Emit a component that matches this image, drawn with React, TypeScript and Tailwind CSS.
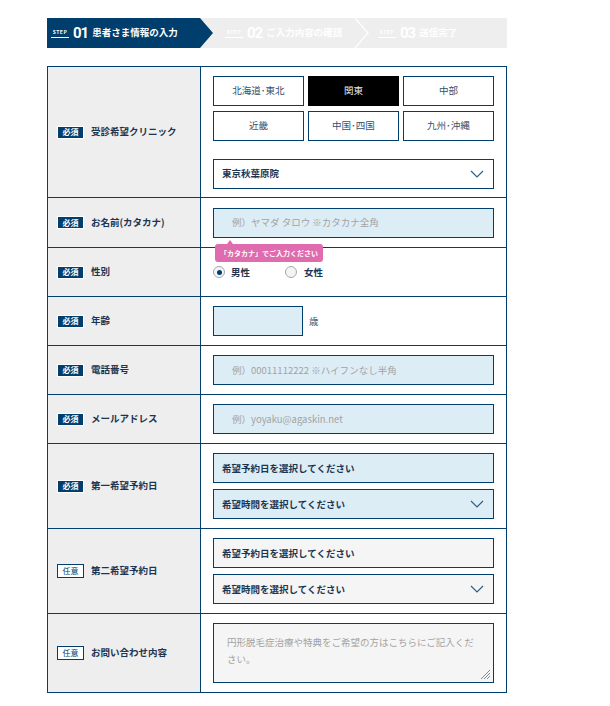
import React from 'react';

const Required = () => (
  <span className="inline-flex items-center justify-center w-[27px] h-[13px] bg-[#003e6d] border border-white text-white text-[8px] font-bold leading-none shrink-0">
    必須
  </span>
);

const Optional = () => (
  <span className="inline-flex items-center justify-center w-[27px] h-[14px] bg-white border border-[#003e6d] text-[#003e6d] text-[8px] leading-none shrink-0">
    任意
  </span>
);

const Chevron = () => (
  <svg width="14" height="8" viewBox="0 0 14 8" className="shrink-0">
    <polyline points="1,1 7,7 13,1" fill="none" stroke="#2f5f86" strokeWidth="1.2" />
  </svg>
);

const StepLabel = ({ num, text }: { num: string; text: string }) => (
  <div className="flex items-center text-white">
    <div className="flex flex-col items-center mr-[4px]">
      <span className="text-[5px] font-bold leading-none tracking-[0.5px]">STEP</span>
      <span className="block w-[18px] h-px mt-[3px] bg-white" />
    </div>
    <span className="text-[15px] font-bold leading-none font-['Roboto',sans-serif] tracking-[-1px]">{num}</span>
    <span className="text-[9.5px] font-bold leading-none ml-[4px]">{text}</span>
  </div>
);

const Row = ({
  label,
  required = true,
  h,
  last,
  children,
}: {
  label: string;
  required?: boolean;
  h: string;
  last?: boolean;
  children: React.ReactNode;
}) => (
  <div className={`flex ${h} ${last ? '' : 'border-b border-[#003e6d]'}`}>
    <div className="w-[153px] shrink-0 bg-[#eeeeee] border-r border-[#003e6d] flex items-center gap-[7px] pl-[9px]">
      {required ? <Required /> : <Optional />}
      <span className="text-[9.5px] font-bold text-[#1d3550] leading-none">{label}</span>
    </div>
    <div className="flex-1 px-[12px] flex flex-col justify-center relative">{children}</div>
  </div>
);

const TextBox = ({ placeholder }: { placeholder: string }) => (
  <div className="h-[30px] border border-[#003e6d] bg-[#dcedf6] flex items-center pl-[18px] text-[9.5px] text-[#a3a3a3]">
    {placeholder}
  </div>
);

const SelectBox = ({ text, bg, chevron }: { text: string; bg: string; chevron?: boolean }) => (
  <div className={`h-[30px] border border-[#003e6d] ${bg} flex items-center justify-between pl-[8px] pr-[9px]`}>
    <span className="text-[9.5px] font-bold text-[#1d3550]">{text}</span>
    {chevron && <Chevron />}
  </div>
);

export default function App() {
  const regions = ['北海道･東北', '関東', '中部', '近畿', '中国･四国', '九州･沖縄'];

  return (
    <div className="w-[610px] h-[706px] bg-white pl-[47px] pt-[18px] font-['Noto_Sans_CJK_JP','Noto_Sans',sans-serif]">
      {/* Steps */}
      <div className="w-[460px] h-[30px] bg-[#eeeeee] flex items-center">
        <div className="w-[166px] h-full bg-[#003e6d] [clip-path:polygon(0_0,153px_0,166px_50%,153px_100%,0_100%)] flex items-center pl-[4px]">
          <StepLabel num="01" text="患者さま情報の入力" />
        </div>
        <div className="w-[142px] h-full flex items-center pl-[12px]">
          <StepLabel num="02" text="ご入力内容の確認" />
        </div>
        <svg width="14" height="30" viewBox="0 0 14 30" className="shrink-0">
          <polyline points="0,0 13,15 0,30" fill="none" stroke="#ffffff" strokeWidth="1.2" />
        </svg>
        <div className="flex-1 h-full flex items-center pl-[9px]">
          <StepLabel num="03" text="送信完了" />
        </div>
      </div>

      {/* Form table */}
      <div className="w-[460px] mt-[18px] border border-[#003e6d]">
        <Row label="受診希望クリニック" h="h-[131px]">
          <div className="grid grid-cols-3 gap-x-[4px] gap-y-[5px]">
            {regions.map((r) => (
              <div
                key={r}
                className={`h-[30px] flex items-center justify-center text-[9.5px] border ${
                  r === '関東'
                    ? 'bg-black border-black text-[#e8e8e8]'
                    : 'bg-white border-[#003e6d] text-[#35506b]'
                }`}
              >
                {r}
              </div>
            ))}
          </div>
          <div className="mt-[18px]">
            <SelectBox text="東京秋葉原院" bg="bg-white" chevron />
          </div>
        </Row>

        <Row label="お名前(カタカナ)" h="h-[50px]">
          <TextBox placeholder="例）ヤマダ タロウ ※カタカナ全角" />
          <div className="absolute left-[14px] top-[42px] z-10">
            <div className="w-0 h-0 ml-[12px] border-x-[3px] border-x-transparent border-b-[4px] border-b-[#e06bae]" />
            <div className="bg-[#e06bae] rounded-[3px] px-[5px] h-[18px] flex items-center text-white text-[7px] font-bold leading-none">
              「カタカナ」でご入力ください
            </div>
          </div>
        </Row>

        <Row label="性別" h="h-[49px]">
          <div className="flex items-center">
            <span className="w-[12px] h-[12px] rounded-full border border-[#a9a9a9] bg-[#f4f4f4] flex items-center justify-center">
              <span className="w-[5px] h-[5px] rounded-full bg-[#003e6d]" />
            </span>
            <span className="ml-[6px] text-[9.5px] font-bold text-[#1d3550]">男性</span>
            <span className="ml-[35px] w-[12px] h-[12px] rounded-full border border-[#a9a9a9] bg-[#f4f4f4]" />
            <span className="ml-[7px] text-[9.5px] font-bold text-[#1d3550]">女性</span>
          </div>
        </Row>

        <Row label="年齢" h="h-[49px]">
          <div className="flex items-center">
            <div className="w-[90px] h-[30px] border border-[#003e6d] bg-[#dcedf6]" />
            <span className="ml-[6px] text-[9.5px] text-[#35506b]">歳</span>
          </div>
        </Row>

        <Row label="電話番号" h="h-[49px]">
          <TextBox placeholder="例）00011112222 ※ハイフンなし半角" />
        </Row>

        <Row label="メールアドレス" h="h-[49px]">
          <TextBox placeholder="例）yoyaku@agaskin.net" />
        </Row>

        <Row label="第一希望予約日" h="h-[85px]">
          <div className="flex flex-col gap-[6px]">
            <SelectBox text="希望予約日を選択してください" bg="bg-[#dcedf6]" />
            <SelectBox text="希望時間を選択してください" bg="bg-[#dcedf6]" chevron />
          </div>
        </Row>

        <Row label="第二希望予約日" required={false} h="h-[85px]">
          <div className="flex flex-col gap-[6px]">
            <SelectBox text="希望予約日を選択してください" bg="bg-[#f5f5f5]" />
            <SelectBox text="希望時間を選択してください" bg="bg-[#f5f5f5]" chevron />
          </div>
        </Row>

        <Row label="お問い合わせ内容" required={false} h="h-[78px]" last>
          <div className="h-[60px] border border-[#003e6d] bg-[#f5f5f5] relative pl-[13px] pr-[16px] pt-[10px]">
            <p className="text-[9.5px] leading-[17px] text-[#a3a3a3]">
              円形脱毛症治療や特典をご希望の方はこちらにご記入ください。
            </p>
            <svg width="12" height="12" viewBox="0 0 12 12" className="absolute right-[2px] bottom-[2px]">
              <line x1="11" y1="2" x2="2" y2="11" stroke="#8a8a8a" strokeWidth="1" />
              <line x1="11" y1="5" x2="5" y2="11" stroke="#8a8a8a" strokeWidth="1" />
              <line x1="11" y1="8" x2="8" y2="11" stroke="#8a8a8a" strokeWidth="1" />
            </svg>
          </div>
        </Row>
      </div>
    </div>
  );
}
